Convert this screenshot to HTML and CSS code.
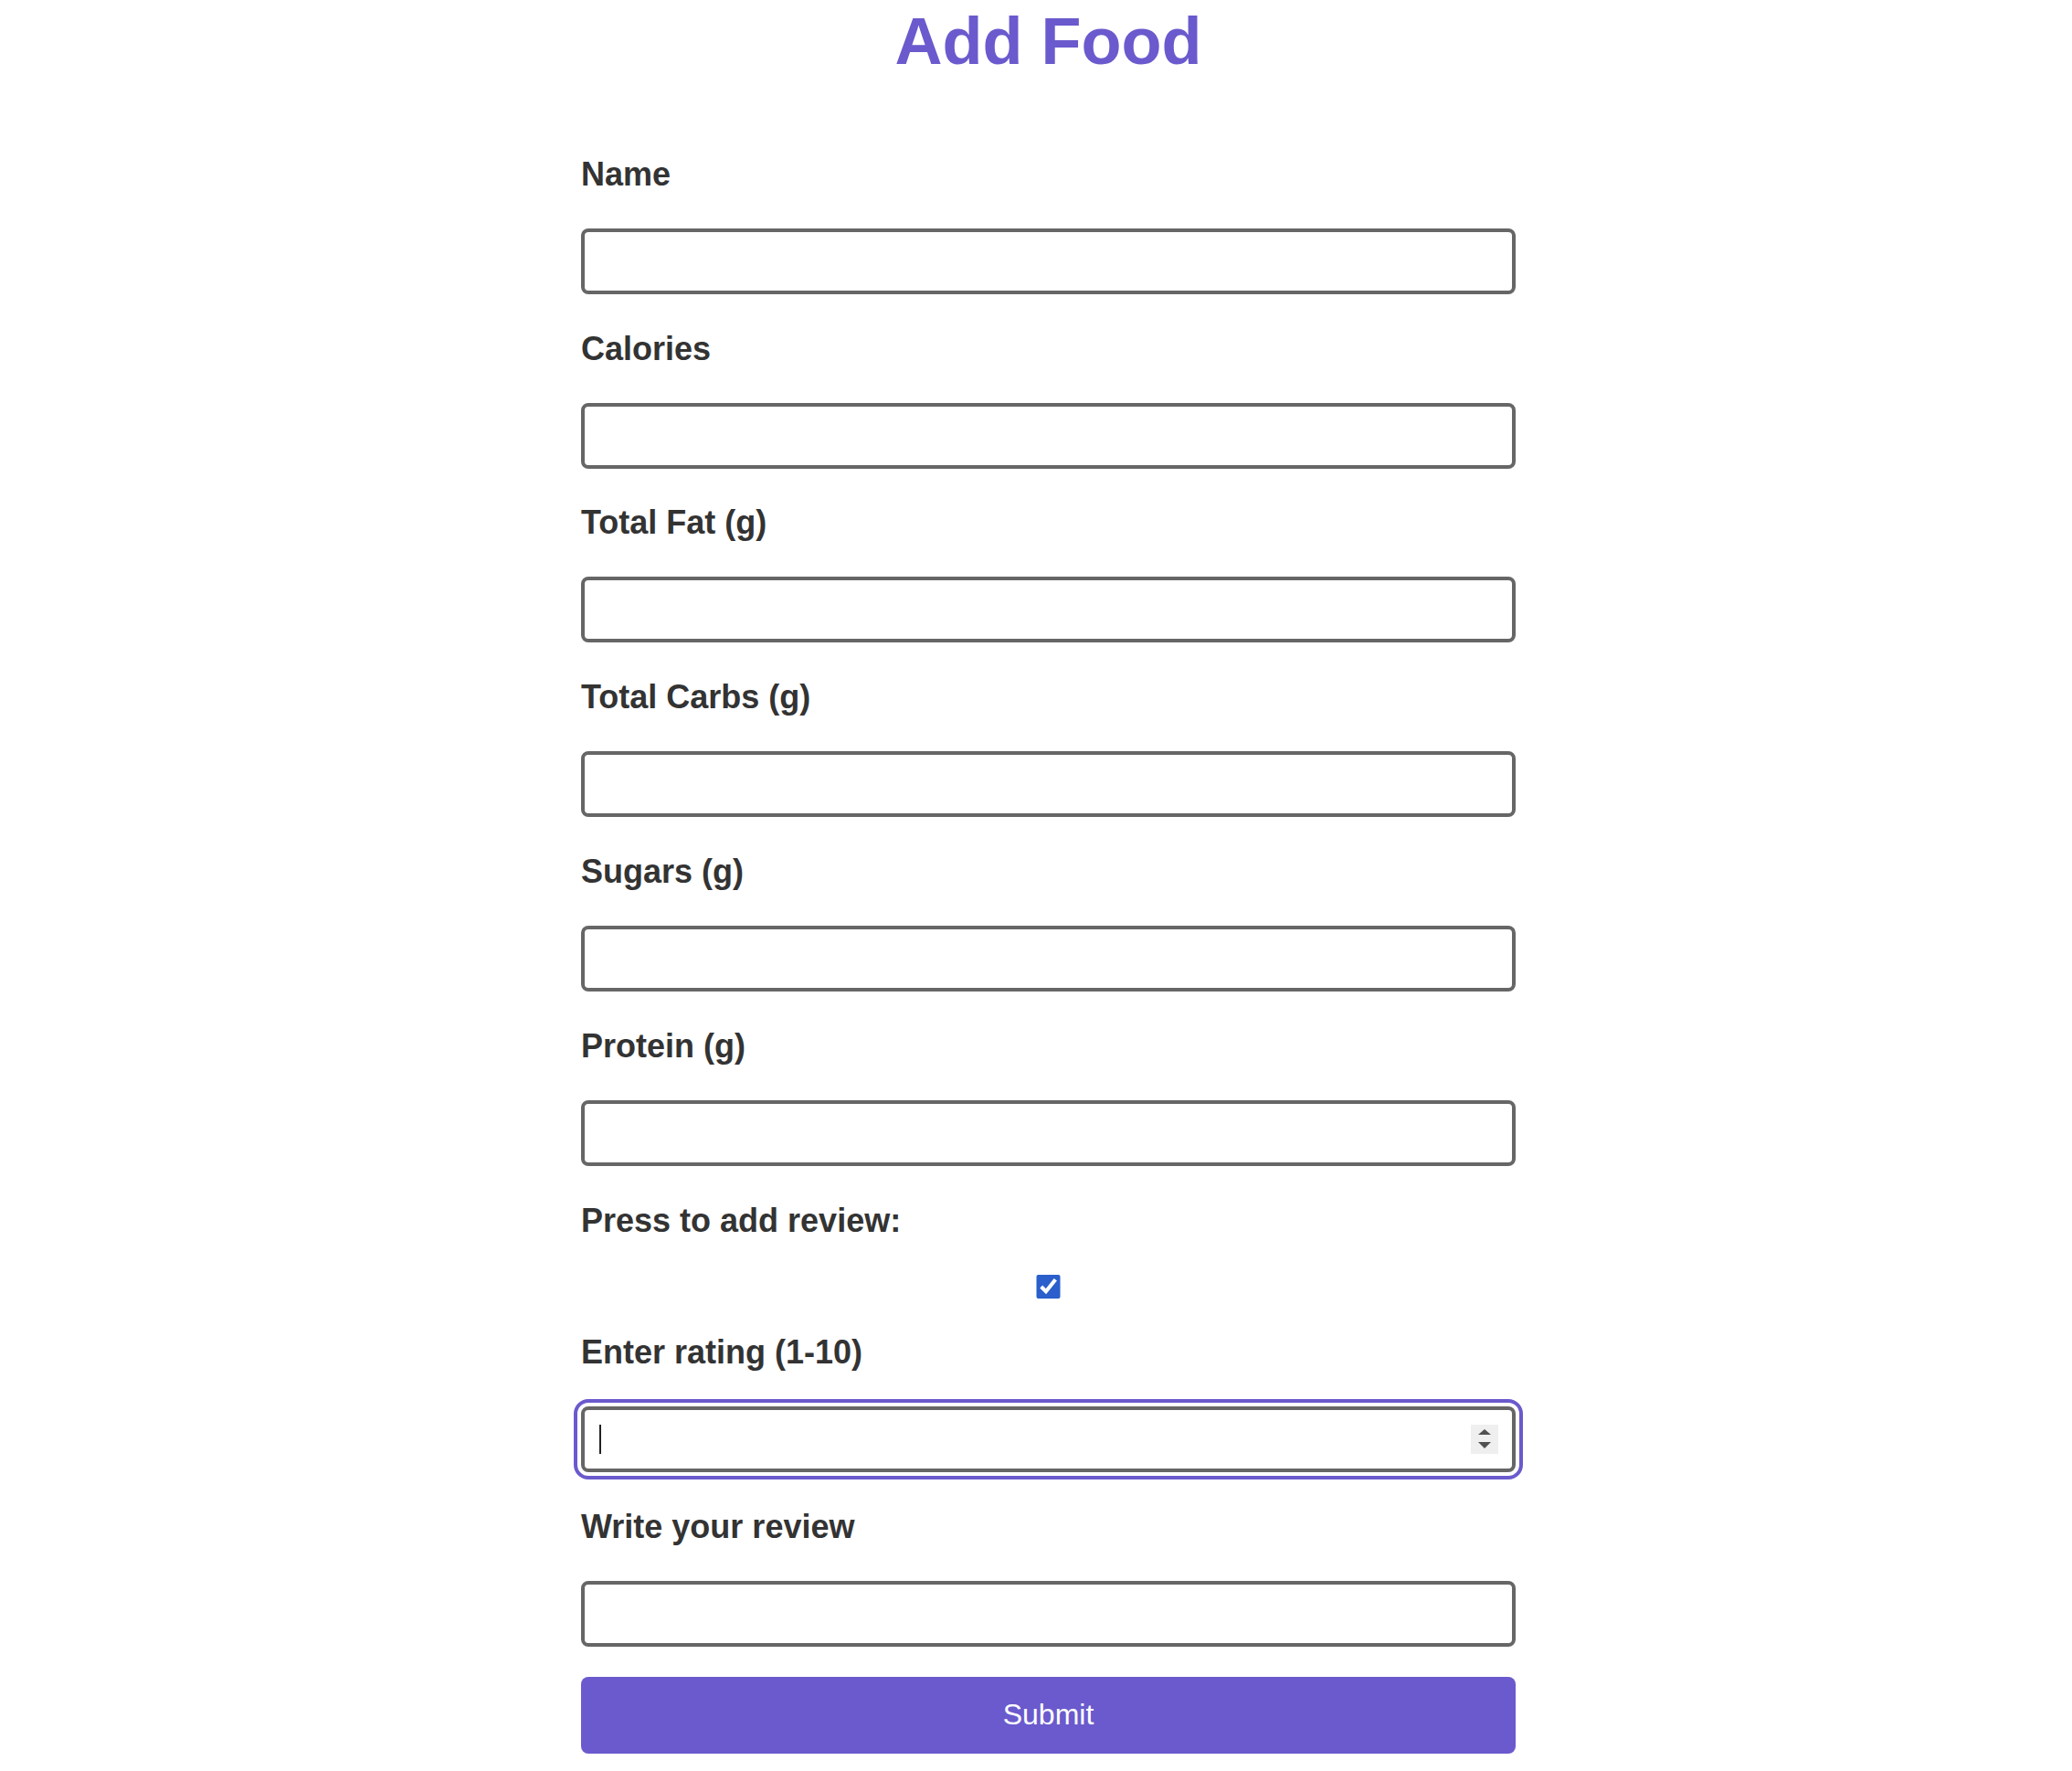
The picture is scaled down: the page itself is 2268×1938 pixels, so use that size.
FILE: index.html
```html
<!DOCTYPE html>
<html lang="en">
<head>
<meta charset="utf-8">
<title>Add Food</title>
<link rel="stylesheet" href="styles.css">
</head>
<body>
<div class="page">
  <main class="container">
    <h1 class="title">Add Food</h1>
    <form class="food-form">
      <div class="field">
        <label class="field-label" for="name">Name</label>
        <input class="text-input" id="name" type="text">
      </div>
      <div class="field">
        <label class="field-label" for="calories">Calories</label>
        <input class="text-input" id="calories" type="text">
      </div>
      <div class="field">
        <label class="field-label" for="fat">Total Fat (g)</label>
        <input class="text-input" id="fat" type="text">
      </div>
      <div class="field">
        <label class="field-label" for="carbs">Total Carbs (g)</label>
        <input class="text-input" id="carbs" type="text">
      </div>
      <div class="field">
        <label class="field-label" for="sugars">Sugars (g)</label>
        <input class="text-input" id="sugars" type="text">
      </div>
      <div class="field">
        <label class="field-label" for="protein">Protein (g)</label>
        <input class="text-input" id="protein" type="text">
      </div>
      <div class="field">
        <label class="field-label" for="review-toggle">Press to add review:</label>
        <input class="check-input" id="review-toggle" type="checkbox" checked>
      </div>
      <div class="field">
        <label class="field-label" for="rating">Enter rating (1-10)</label>
        <div class="rating-wrap">
          <input class="text-input number-input is-focused" id="rating" type="number" min="1" max="10">
          <span class="caret"></span>
          <span class="spinner">
            <svg width="30" height="32" viewBox="0 0 30 32">
              <rect width="30" height="32" fill="#efefef"/>
              <polygon points="15,5 22,11 8,11" fill="#505050"/>
              <polygon points="8,19 22,19 15,26" fill="#505050"/>
            </svg>
          </span>
        </div>
      </div>
      <div class="field">
        <label class="field-label" for="review">Write your review</label>
        <input class="text-input" id="review" type="text">
      </div>
      <button class="submit-btn" type="button">Submit</button>
    </form>
  </main>
</div>
</body>
</html>
```
FILE: styles.css
```css
html, body {
  margin: 0;
  padding: 0;
  background: #ffffff;
}

body {
  font-family: "Liberation Sans", Arial, Helvetica, sans-serif;
  color: #333333;
}

.page {
  padding-left: 27px;
}

.container {
  width: 1023px;
  margin: 0 auto;
}

.title {
  margin: 0;
  padding-top: 4px;
  font-size: 72px;
  line-height: 1.15;
  font-weight: 700;
  color: #6a5acd;
  text-align: center;
}

.food-form {
  display: flex;
  flex-direction: column;
  gap: 40.8px;
  margin-top: 85px;
}

.field {
  display: flex;
  flex-direction: column;
}

.field-label {
  display: block;
  margin-bottom: 41px;
  font-size: 36px;
  line-height: 37px;
  font-weight: 700;
  color: #333333;
}

.text-input {
  box-sizing: border-box;
  display: block;
  width: 100%;
  height: 72px;
  margin: 0;
  padding: 0 16px;
  border: 4px solid #666666;
  border-radius: 8px;
  background: #ffffff;
  font-family: inherit;
  font-size: 32px;
  color: #222222;
  outline: none;
}

.number-input {
  -moz-appearance: textfield;
  appearance: textfield;
}

.number-input::-webkit-inner-spin-button,
.number-input::-webkit-outer-spin-button {
  -webkit-appearance: none;
  margin: 0;
}

.is-focused {
  outline: 4px solid #6a5acd;
  outline-offset: 4px;
  caret-color: transparent;
}

.rating-wrap {
  position: relative;
}

.caret {
  position: absolute;
  left: 20px;
  top: 20px;
  width: 2px;
  height: 32px;
  background: #222222;
}

.spinner {
  position: absolute;
  right: 19px;
  top: 20px;
  width: 30px;
  height: 32px;
  display: block;
}

.spinner svg {
  display: block;
}

.check-input {
  display: block;
  width: 100%;
  height: 26px;
  margin: 0;
  accent-color: #2a5fcc;
}

.submit-btn {
  display: block;
  width: 100%;
  height: 84px;
  margin-top: -8px;
  border: none;
  border-radius: 8px;
  background: #6a5acd;
  color: #ffffff;
  font-family: inherit;
  font-size: 32px;
  font-weight: 400;
  cursor: pointer;
}
```
